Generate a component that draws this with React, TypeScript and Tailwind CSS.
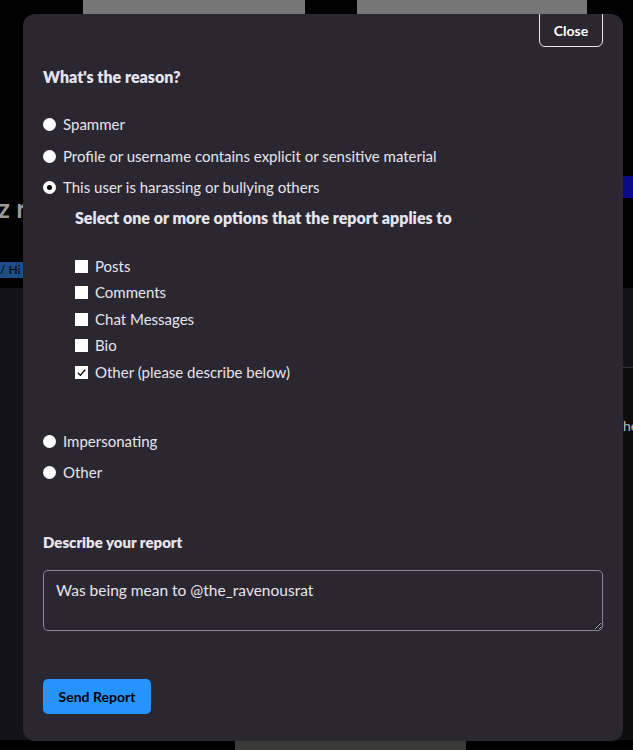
import { useState } from 'react';

const reasons = [
  { id: 'spam', label: 'Spammer' },
  { id: 'profile', label: 'Profile or username contains explicit or sensitive material' },
  { id: 'harass', label: 'This user is harassing or bullying others' },
];

const moreReasons = [
  { id: 'imp', label: 'Impersonating' },
  { id: 'other', label: 'Other' },
];

const appliesTo = ['Posts', 'Comments', 'Chat Messages', 'Bio', 'Other (please describe below)'];

const Radio = ({ checked }: { checked: boolean }) => (
  <span className="w-[13px] h-[13px] rounded-full bg-white flex items-center justify-center shrink-0">
    {checked && <span className="w-[5px] h-[5px] rounded-full bg-black" />}
  </span>
);

const Checkbox = ({ checked }: { checked: boolean }) => (
  <span className="w-[13px] h-[13px] bg-white flex items-center justify-center shrink-0">
    {checked && (
      <svg viewBox="0 0 12 12" className="w-[11px] h-[11px]">
        <path d="M2 6.2 L4.8 9 L10 3" fill="none" stroke="#111" strokeWidth="1.4" />
      </svg>
    )}
  </span>
);

const App = () => {
  const [reason, setReason] = useState('harass');
  const [options, setOptions] = useState<string[]>(['Other (please describe below)']);
  const [text, setText] = useState('Was being mean to @the_ravenousrat');

  const toggle = (o: string) =>
    setOptions((prev) => (prev.includes(o) ? prev.filter((p) => p !== o) : [...prev, o]));

  return (
    <div
      className="relative w-[633px] h-[750px] bg-black overflow-hidden text-[#e6e4ec]"
      style={{ fontFamily: "Lato, 'Noto Sans', sans-serif" }}
    >
      {/* page behind the dialog */}
      <div className="flex flex-col h-full">
        <div className="h-[14px] flex shrink-0">
          <div className="ml-[83px] w-[222px] bg-[#777]" />
          <div className="ml-[52px] w-[230px] bg-[#777]" />
        </div>
        <div className="h-[162px] shrink-0" />
        <div className="h-[22px] flex justify-end shrink-0">
          <div className="w-[20px] bg-[#0a0a8a]" />
        </div>
        <div className="h-[64px] flex items-start shrink-0">
          <span className="ml-[-2px] mt-[-3px] text-[26px] leading-none font-bold text-[#9a9a9a]">z r</span>
        </div>
        <div className="h-[16px] shrink-0">
          <div className="w-[40px] h-full bg-[#1d4e86] text-[12px] text-black leading-[16px]">/ Hi</div>
        </div>
        <div className="h-[10px] shrink-0" />
        <div className="flex-1 flex bg-[#131216]">
          <div className="flex-1" />
          <div className="w-[10px] flex flex-col">
            <div className="h-[80px] border-b border-[#333]" />
            <div className="flex-1 bg-[#0d0d0d] pt-[47px] text-[14px] text-[#bbb]">he</div>
          </div>
        </div>
        <div className="h-[10px] flex shrink-0">
          <div className="ml-[235px] w-[231px] bg-[#3a3a36]" />
        </div>
      </div>

      {/* dialog */}
      <div className="absolute left-[23px] top-[14px] w-[600px] h-[727px] bg-[#2a2731] rounded-[12px] overflow-hidden px-[20px]">
        <div className="flex justify-end">
          <button className="mt-[-10px] h-[43px] w-[64px] border border-[#e6e4ec] rounded-[6px] pt-[10px] text-[14px] font-bold text-white">
            Close
          </button>
        </div>

        <div className="mt-[18px] text-[16px] font-extrabold">What's the reason?</div>

        <div className="mt-[26px] flex flex-col gap-[12.5px]">
          {reasons.map((r) => (
            <label key={r.id} className="flex items-center gap-[7px] h-[19px] text-[15px] cursor-pointer" onClick={() => setReason(r.id)}>
              <Radio checked={reason === r.id} />
              {r.label}
            </label>
          ))}
        </div>

        <div className="pl-[32px]">
          <div className="mt-[9px] text-[16px] font-extrabold">Select one or more options that the report applies to</div>
          <div className="mt-[26.5px] flex flex-col gap-[7.5px]">
            {appliesTo.map((o) => (
              <label key={o} className="flex items-center gap-[7px] h-[19px] text-[15px] cursor-pointer" onClick={() => toggle(o)}>
                <Checkbox checked={options.includes(o)} />
                {o}
              </label>
            ))}
          </div>
        </div>

        <div className="mt-[50px] flex flex-col gap-[12.5px]">
          {moreReasons.map((r) => (
            <label key={r.id} className="flex items-center gap-[7px] h-[19px] text-[15px] cursor-pointer" onClick={() => setReason(r.id)}>
              <Radio checked={reason === r.id} />
              {r.label}
            </label>
          ))}
        </div>

        <div className="mt-[49px] text-[15px] font-extrabold">Describe your report</div>

        <textarea
          value={text}
          onChange={(e) => setText(e.target.value)}
          className="mt-[16px] block w-[560px] h-[61px] bg-transparent border border-[#8a8792] rounded-[5px] px-[12px] py-[8px] text-[15.5px] text-[#e6e4ec] outline-none"
        />

        <button className="mt-[48px] h-[35px] w-[108px] bg-[#2694ff] rounded-[5px] text-[14px] font-bold text-black">
          Send Report
        </button>
      </div>
    </div>
  );
};

export default App;
